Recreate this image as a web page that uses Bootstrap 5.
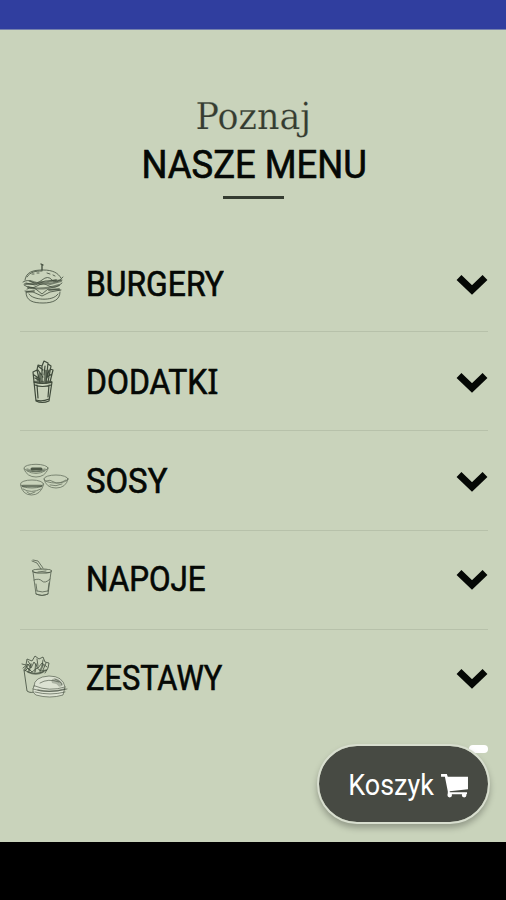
<!DOCTYPE html>
<html lang="pl">
<head>
<meta charset="utf-8">
<meta name="viewport" content="width=device-width, initial-scale=1">
<title>Nasze menu</title>
<link href="https://cdn.jsdelivr.net/npm/bootstrap@5.3.0/dist/css/bootstrap.min.css" rel="stylesheet">
<style>
body{background:#c9d3bb;font-family:Roboto,"Liberation Sans",sans-serif;color:#050805}
.app{height:900px}
.topbar{height:30px;background:#303e9f;border-bottom:1px solid #7581ad}
.bottombar{height:58px;background:#000}
.intro{padding-top:65px;height:203px}
.kicker{font:37px/44px "DejaVu Serif","Liberation Serif",serif;color:#353c31}
.kicker span{display:inline-block;-webkit-text-stroke:.25px #c9d3bb}
.title{font-size:39.5px;line-height:46px;font-weight:400;margin:3px 0 0 2px;-webkit-text-stroke:.7px #050805}
.title span,.label span{display:inline-block;white-space:nowrap}
.rule{width:61px;height:3px;background:#353c31;margin:8px auto 0}
.menu-row{height:99.2px;margin:0 18px 0 20px;padding-top:3px;border-bottom:1px solid #b7c1aa}
.menu-row:nth-child(2){padding-top:2px}
.menu-row:nth-child(3){padding-top:1px}
.menu-row:nth-child(4){padding-top:0;padding-bottom:1px}
.menu-row:last-child{border-bottom-color:transparent;padding:0 0 2px}
.sketch{width:50px;height:48px;fill:none;stroke:#3f4a3b;stroke-width:.8;stroke-linecap:round;stroke-linejoin:round;flex:none}
.label{font-size:35.3px;line-height:44px;font-weight:400;margin:0 0 0 16px;-webkit-text-stroke:.65px #050805}
.label span{transform-origin:0 50%}
.label i{font:400 35.3px/1 "Noto Sans",sans-serif}
.chev{width:32px;height:22px;flex:none}
.cart{right:18px;top:746px;width:169px;height:76px;background:#474a43;color:#fff;border-radius:39px;outline:2px solid #d8decf;box-shadow:0 4px 6px 2px #0004;font-size:29px;padding:3px 0 0 7px}
.cart span{display:inline-block;transform:scaleX(.93)}
.pill{right:18px;top:745px;width:19px;height:8px;border-radius:4px;background:#fff}
</style>
</head>
<body>
<div class="app d-flex flex-column position-relative overflow-hidden">
<div class="topbar flex-shrink-0"></div>
<main class="flex-grow-1">
<header class="intro text-center">
<div class="kicker"><span data-w="114">Poznaj</span></div>
<h1 class="title"><span data-w="223">NASZE MENU</span></h1>
<div class="rule"></div>
</header>
<section>
<div class="menu-row d-flex align-items-center">
<svg class="sketch" viewBox="0 0 50 48"><path stroke-width="1.3" d="M22 10V5M21 4l2 1"/><path d="M5 20C6 12 13 10 23 10s15 3 18 8M7 17c3-5 8-6 15-6M6 32c0 9 7 11 17 11s17-3 17-11M9 34c3 6 24 8 29 0M12 14l2 0M17 13l2 0M27 13l3 1M33 15l2 1"/><path d="M3 22q5-3 9 0t10-2 10 0 11-3M4 25q7 5 13 1t12 0 13-3M6 23l9 2 10-4 17-1M7 29q6-3 10 1l5 4 6-5 12 1M5 31l8 1 9 4 8-4 11-2"/><path stroke-width="2" opacity=".6" d="M5 24l8 0 9-2 8 2 11-3M8 27q12 4 31-2M10 21l10 3 16-4M7 32l7-1M29 30l10-1"/></svg>
<h2 class="label"><span data-w="136">BURGERY</span></h2>
<svg class="chev ms-auto" viewBox="0 0 32 22"><path d="M3 4.5L16 17 29 4.5" fill="none" stroke="#050805" stroke-width="7"/></svg>
</div>
<div class="menu-row d-flex align-items-center">
<svg class="sketch" viewBox="0 0 50 48"><path stroke-width="1.2" d="M14 24l2 19q6 3 13 0l3-19M16 42q6 2 13-1M17 27l1 13M29 27l-1 12M14 24q8 3 18 0M15 27q7 3 16 0"/><path stroke-width="1.2" d="M14 24l-1-10 4-2 3 13M17 12l1-5 4 1v16M22 8l2-5 4 2-2 20M28 6l3 2-3 16M30 11l3 1-3 12M14 17l6 4M18 12l5 7M25 8l-1 9M29 12l-2 8M32 16l-5 3M18 8l5 4M15 20l4 2"/><path stroke-width="2.4" opacity=".7" d="M15 24l16 0M20 16v7M26 13l-1 9M17 20l2 4"/></svg>
<h2 class="label"><span data-w="130">DODATK<i>I</i></span></h2>
<svg class="chev ms-auto" viewBox="0 0 32 22"><path d="M3 4.5L16 17 29 4.5" fill="none" stroke="#050805" stroke-width="7"/></svg>
</div>
<div class="menu-row d-flex align-items-center">
<svg class="sketch" viewBox="0 0 50 48"><g opacity=".7"><ellipse cx="16" cy="11" rx="12" ry="3.7"/><path d="M4 12q3 8 12 8t12-8M7 14q9 5 18 0"/><ellipse cx="36" cy="22" rx="12" ry="4"/><path d="M24 22q2 9 12 9t12-9M26 24q4-2 8 1t12-2M30 28q6 2 12-1"/><ellipse cx="12" cy="27" rx="11.5" ry="4"/><path d="M.5 28q2 10 11 10t12-10M3 32q8 5 18 0M7 35l3 2 5-2"/></g><path stroke-width="1.5" opacity=".4" d="M7 12q9 5 18 0"/><path stroke-width="3" opacity=".9" d="M12 12l9 0"/><path stroke-width="2.6" opacity=".65" d="M3 29l18 0"/></svg>
<h2 class="label"><span data-w="79">SOSY</span></h2>
<svg class="chev ms-auto" viewBox="0 0 32 22"><path d="M3 4.5L16 17 29 4.5" fill="none" stroke="#050805" stroke-width="7"/></svg>
</div>
<div class="menu-row d-flex align-items-center">
<svg class="sketch" viewBox="0 0 50 48"><g opacity=".85"><path d="M13 5l5 1 5 7M12 6l5 2 4 6"/><ellipse cx="22" cy="16" rx="9.5" ry="2" stroke-width="1.1"/><path d="M13 17l3 22q6 3 12 0l3-22M14 25q5-2 8 1t8-2M17 36q5 2 11 0M16 29l1 7M29 28l-1 8M16 39q6 3 12 0M18 17l8-1"/></g></svg>
<h2 class="label"><span data-w="118">NAPOJE</span></h2>
<svg class="chev ms-auto" viewBox="0 0 32 22"><path d="M3 4.5L16 17 29 4.5" fill="none" stroke="#050805" stroke-width="7"/></svg>
</div>
<div class="menu-row d-flex align-items-center">
<svg class="sketch" viewBox="0 0 50 48"><path d="M4 16l3 21q4 3 9 0M4 16q11 7 23 0M2 10l4 1 1-6 5 2 3-5 4 3 4-2 2 5 4 1-1 5-3 5M3 14l5-4 3 4 3-6 4 6 4-5 5 4M5 17l3-3 4 4 5-4 4 3 5-1M8 7l3 5M17 5l1 7M23 6l-1 6M6 12l3 4M26 9l-3 7"/><path stroke-width="1.7" opacity=".65" d="M5 15l3-4M9 17l2-7M15 18l1-8M20 17l3-6M8 18q8 4 15 0"/><path fill="#dce2d2" stroke-width=".6" d="M14 32q0-9 15-10 14 0 16 11l-2 8q-13 4-27 0-5-3-2-9z"/><path stroke-width=".6" d="M15 32q14 6 30 1M13 35q15 5 34 0M15 38q15 4 30 0M20 29q8-5 19-1M35 25q7 3 7 6"/><path stroke-width="5" opacity=".3" d="M34 27q4 0 6 3"/><path stroke-width="1.5" opacity=".5" d="M18 36q13 3 27-1"/></svg>
<h2 class="label"><span data-w="134">ZESTAWY</span></h2>
<svg class="chev ms-auto" viewBox="0 0 32 22"><path d="M3 4.5L16 17 29 4.5" fill="none" stroke="#050805" stroke-width="7"/></svg>
</div>
</section>
</main>
<div class="bottombar flex-shrink-0"></div>
<div class="pill position-absolute"></div>
<button class="cart border-0 position-absolute d-flex align-items-center justify-content-center"><span>Koszyk</span>
<svg width="28" height="25" viewBox="0 0 29 26" class="ms-1" fill="#fff"><path d="M0 1h6l1 3h21v13l-19 2v1h18v2H7v-3L4 4H0z"/><circle cx="9" cy="23" r="2.4"/><circle cx="24" cy="23" r="2.4"/></svg></button>
</div>
<script src="https://cdn.jsdelivr.net/npm/bootstrap@5.3.0/dist/js/bootstrap.bundle.min.js"></script>
<script>
// Condense each heading to its set width.
document.querySelectorAll('[data-w]').forEach(function(e){
  e.style.transform='scaleX('+((+e.dataset.w+2)/e.offsetWidth)+')';
});
</script>
</body>
</html>
